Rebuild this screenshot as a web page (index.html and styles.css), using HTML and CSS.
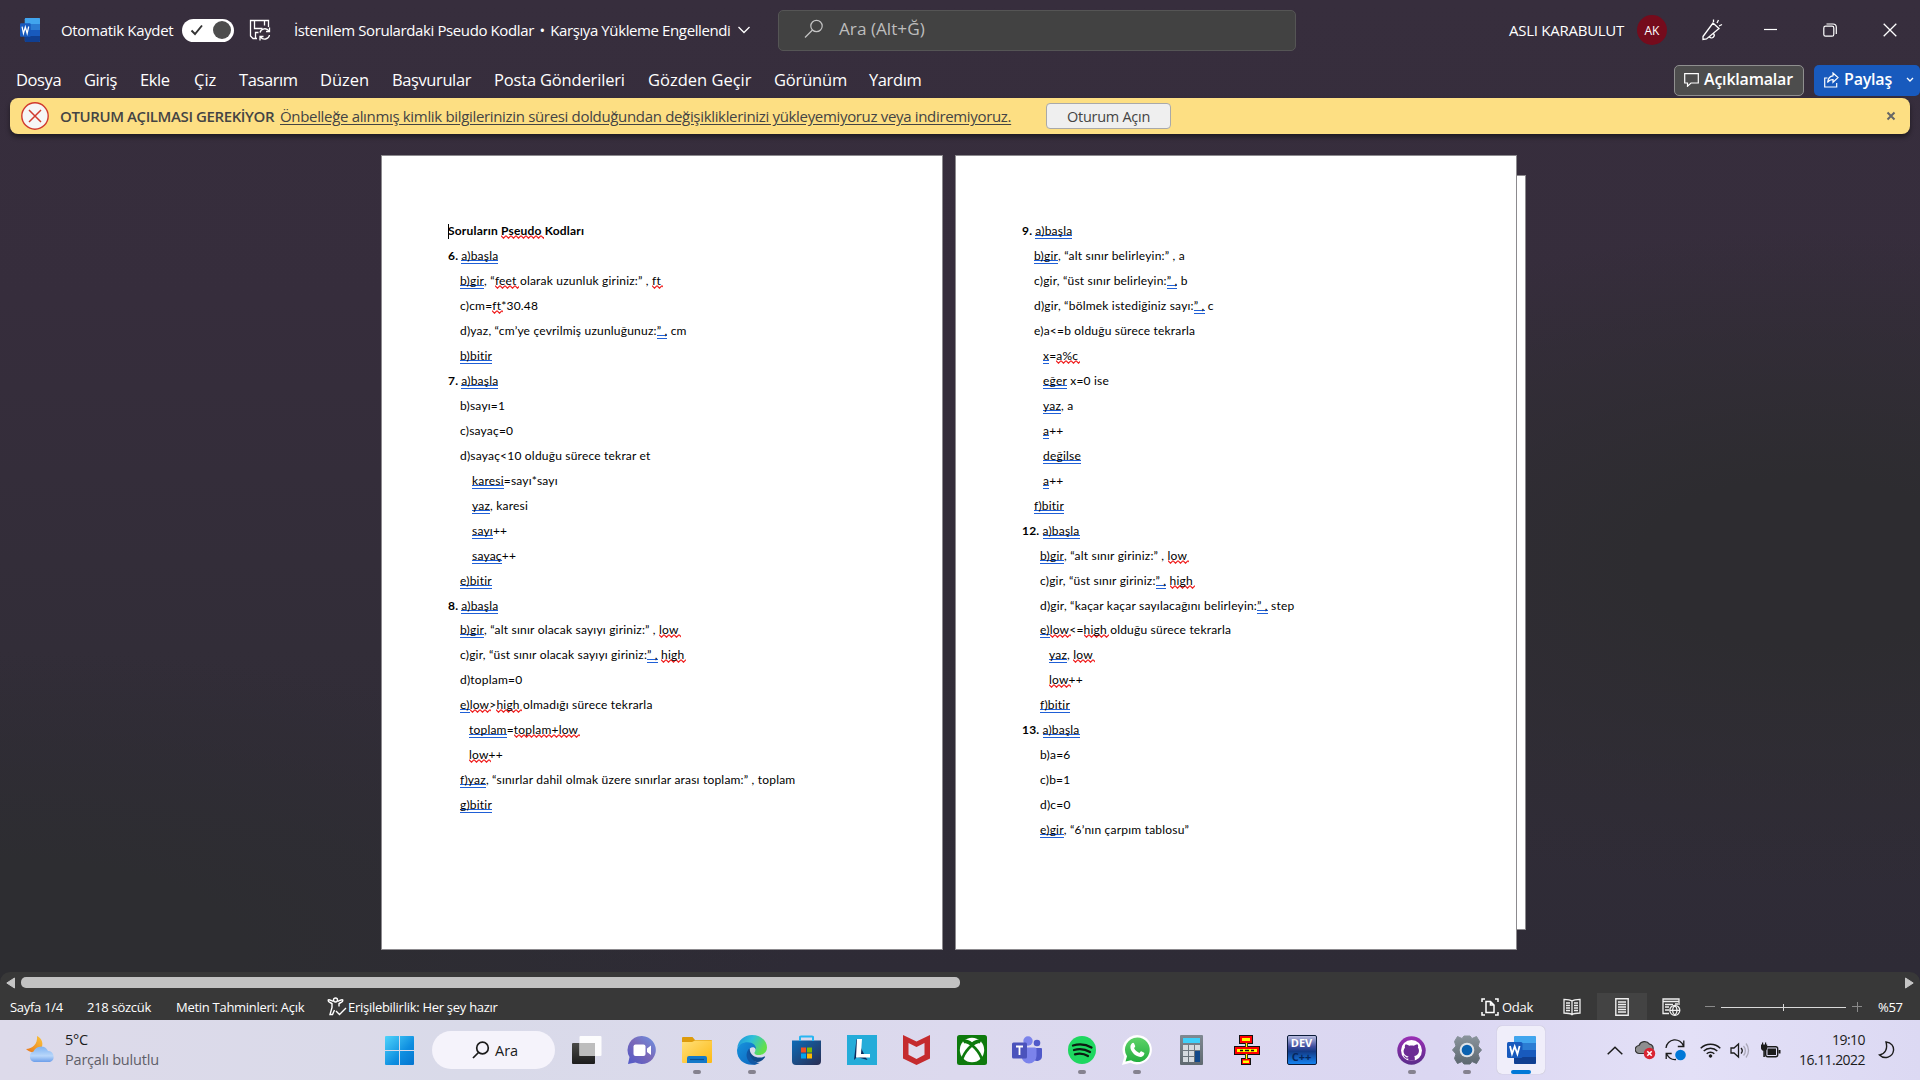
FILE: index.html
```html
<!DOCTYPE html>
<html lang="tr">
<head>
<meta charset="utf-8">
<title>İstenilem Sorulardaki Pseudo Kodlar</title>
<link rel="stylesheet" href="styles.css">
</head>
<body>
<div class="app">
  <header class="titlebar">
    <svg class="word-logo" width="20" height="24" viewBox="0 0 29 28" preserveAspectRatio="none"><use href="#word"/></svg>
    <span class="autosave">Otomatik Kaydet</span>
    <span class="toggle"><svg width="14" height="12" viewBox="0 0 14 12"><path d="M1.5 6.5 5 10 12 1.5" fill="none" stroke="#333" stroke-width="1.9"/></svg><i class="knob"></i></span>
    <svg class="save" width="22" height="22" viewBox="0 0 22 22" fill="none" stroke="#fff" stroke-width="1.3"><path d="M8 19.500H4L1.500 17V1.500h18V8M5.500 1.500v8h8M15.500 1.500v5M6.500 19.500v-6h3"/><path d="M11 13.500a5 5 0 0 1 9-1.500M20.500 8.500V12.500H17M20.500 16a5 5 0 0 1-9 2M11 21.500V17.500H14.500"/></svg>
    <span class="doc-title">İstenilem Sorulardaki Pseudo Kodlar <i class="bullet">•</i> Karşıya Yükleme Engellendi</span>
    <svg class="title-chev" width="12" height="8" viewBox="0 0 12 8"><path d="M.5 1 6 6.500 11.500 1" fill="none" stroke="#fff" stroke-width="1.3"/></svg>
    <div class="search">
      <svg width="20" height="20" viewBox="0 0 20 20" fill="none" stroke="#c4c4c4" stroke-width="1.2"><circle cx="12.500" cy="7" r="5.700"/><path d="M8.500 11 1 18.500"/></svg>
      <span>Ara (Alt+Ğ)</span>
    </div>
    <span class="user">ASLI KARABULUT</span>
    <span class="avatar">AK</span>
    <svg class="pen" width="22" height="22" viewBox="0 0 22 22" fill="none" stroke="#fff" stroke-width="1.3"><path d="M2 17.500 12 4l6 5.500L5.500 20 2 20.500Z M12 4l6.500 6M8.500 18a2.200 2.200 0 1 0 4-3.500M12.500 3V.5M16 4l1.500-3M18 7l3-1.500"/></svg>
    <svg class="wmin" width="14" height="14" viewBox="0 0 14 14"><path d="M0 6.500h13" stroke="#fff" stroke-width="1.200"/></svg>
    <svg class="wmax" width="14" height="14" viewBox="0 0 14 14" fill="none" stroke="#fff" stroke-width="1.200"><rect x=".8" y="3.200" width="10" height="10" rx="1.800"/><path d="M3.500 1h6.500a3.300 3.300 0 0 1 3.300 3.300V11"/></svg>
    <svg class="wclose" width="14" height="14" viewBox="0 0 14 14"><path d="m.7.700 12.600 12.600m0-12.600L.7 13.300" stroke="#fff" stroke-width="1.300"/></svg>
  </header>

  <nav class="tabs">
    <div class="tablist"><span>Dosya</span><span>Giriş</span><span>Ekle</span><span class="wide">Çiz</span><span>Tasarım</span><span class="wide">Düzen</span><span>Başvurular</span><span class="mid">Posta Gönderileri</span><span class="wide">Gözden Geçir</span><span class="mid">Görünüm</span><span>Yardım</span></div>
    <div class="actions">
      <button class="btn comments"><svg width="15" height="14" viewBox="0 0 15 14"><path d="M.7.700h13.600v9.300H7L3.500 13.200V10H.7Z" fill="none" stroke="#fff" stroke-width="1.200"/></svg><span>Açıklamalar</span></button>
      <button class="btn share"><svg width="15" height="16" viewBox="0 0 15 16" fill="none" stroke="#fff" stroke-width="1.200"><path d="M3.500 6H.7v9h12v-4"/><path d="M9 1v2.800C5.500 4 4 6.500 3.500 10.500 5 8.300 6.500 7.500 9 7.500v2.800L14 5.600Z"/></svg><span>Paylaş</span><svg class="share-chev" width="8" height="6" viewBox="0 0 8 6"><path d="m1 1 3 3 3-3" fill="none" stroke="#fff" stroke-width="1.300"/></svg></button>
    </div>
  </nav>

  <div class="notice">
    <svg width="28" height="28" viewBox="0 0 28 28"><circle cx="14" cy="14" r="13.200" fill="#f6f6f6" stroke="#d13a2e" stroke-width="1.400"/><path d="m8 8 12 12m0-12L8 20" stroke="#d13a2e" stroke-width="1.500"/></svg>
    <b>OTURUM AÇILMASI GEREKİYOR</b>
    <a>Önbelleğe alınmış kimlik bilgilerinizin süresi dolduğundan değişikliklerinizi yükleyemiyoruz veya indiremiyoruz.</a>
    <button class="signin"><span>Oturum Açın</span></button>
    <svg class="notice-x" width="10" height="10" viewBox="0 0 10 10"><path d="m1.500 1.500 7 7m0-7-7 7" stroke="#666" stroke-width="2"/></svg>
  </div>

  <main class="canvas">
    <article class="page first">
      <p><b><i class="caret"></i>Soruların <span class="sp">Pseudo</span> Kodları</b></p>
      <p><b>6. </b><span class="gr">a)başla</span></p>
      <p class="i1"><span class="gr">b)gir</span>, “<span class="sp">feet</span> olarak uzunluk giriniz:” , <span class="sp">ft</span></p>
      <p class="i1">c)cm=<span class="sp">ft</span>*30.48</p>
      <p class="i1">d)yaz, “cm’ye çevrilmiş uzunluğunuz:<span class="gr">” ,</span> cm</p>
      <p class="i1"><span class="gr">b)bitir</span></p>
      <p><b>7. </b><span class="gr">a)başla</span></p>
      <p class="i1">b)sayı=1</p>
      <p class="i1">c)sayaç=0</p>
      <p class="i1">d)sayaç&lt;10 olduğu sürece tekrar et</p>
      <p class="i3"><span class="gr">karesi</span>=sayı*sayı</p>
      <p class="i3"><span class="gr">yaz</span>, karesi</p>
      <p class="i3"><span class="gr">sayı</span>++</p>
      <p class="i3"><span class="gr">sayaç</span>++</p>
      <p class="i1"><span class="gr">e)bitir</span></p>
      <p><b>8. </b><span class="gr">a)başla</span></p>
      <p class="i1"><span class="gr">b)gir</span>, “alt sınır olacak sayıyı giriniz:” , <span class="sp">low</span></p>
      <p class="i1">c)gir, “üst sınır olacak sayıyı giriniz:<span class="gr">” ,</span> <span class="sp">high</span></p>
      <p class="i1">d)toplam=0</p>
      <p class="i1"><span class="gr">e)</span><span class="sp">low</span>&gt;<span class="sp">high</span> olmadığı sürece tekrarla</p>
      <p class="i2"><span class="gr">toplam</span>=<span class="sp">toplam+low</span></p>
      <p class="i2"><span class="sp">low</span>++</p>
      <p class="i1"><span class="gr">f)yaz</span>, “sınırlar dahil olmak üzere sınırlar arası toplam:” , toplam</p>
      <p class="i1"><span class="gr">g)bitir</span></p>
    </article>
    <article class="page second">
      <p><b>9. </b><span class="gr">a)başla</span></p>
      <p class="i1"><span class="gr">b)gir</span>, “alt sınır belirleyin:” , a</p>
      <p class="i1">c)gir, “üst sınır belirleyin:<span class="gr">” ,</span> b</p>
      <p class="i1">d)gir, “bölmek istediğiniz sayı:<span class="gr">” ,</span> c</p>
      <p class="i1">e)a&lt;=b olduğu sürece tekrarla</p>
      <p class="i2"><span class="gr">x</span>=<span class="sp">a%c</span></p>
      <p class="i2"><span class="gr">eğer</span> x=0 ise</p>
      <p class="i2"><span class="gr">yaz</span>, a</p>
      <p class="i2"><span class="gr">a</span>++</p>
      <p class="i2"><span class="gr">değilse</span></p>
      <p class="i2"><span class="gr">a</span>++</p>
      <p class="i1"><span class="gr">f)bitir</span></p>
      <p><b>12. </b><span class="gr">a)başla</span></p>
      <p class="i4"><span class="gr">b)gir</span>, “alt sınır giriniz:” , <span class="sp">low</span></p>
      <p class="i4">c)gir, “üst sınır giriniz:<span class="gr">” ,</span> <span class="sp">high</span></p>
      <p class="i4">d)gir, “kaçar kaçar sayılacağını belirleyin:<span class="gr">” ,</span> step</p>
      <p class="i4"><span class="gr">e)</span><span class="sp">low</span>&lt;=<span class="sp">high</span> olduğu sürece tekrarla</p>
      <p class="i5"><span class="gr">yaz</span>, <span class="sp">low</span></p>
      <p class="i5"><span class="sp">low</span>++</p>
      <p class="i4"><span class="gr">f)bitir</span></p>
      <p><b>13. </b><span class="gr">a)başla</span></p>
      <p class="i4">b)a=6</p>
      <p class="i4">c)b=1</p>
      <p class="i4">d)c=0</p>
      <p class="i4"><span class="gr">e)gir</span>, “6’nın çarpım tablosu”</p>
    </article>
    <div class="page-behind"></div>
  </main>

  <div class="scrollbar">
    <svg width="9" height="12" viewBox="0 0 9 12"><path d="M8.500 1v10L.8 6Z" fill="#c6c6c6" stroke="#c6c6c6" stroke-linejoin="round"/></svg>
    <div class="thumb"></div>
    <svg class="right" width="9" height="12" viewBox="0 0 9 12"><path d="M.5 1v10l7.700-5Z" fill="#c6c6c6" stroke="#c6c6c6" stroke-linejoin="round"/></svg>
  </div>

  <footer class="status">
    <span class="s1">Sayfa 1/4</span>
    <span class="s2">218 sözcük</span>
    <span class="s3">Metin Tahminleri: Açık</span>
    <svg class="acc" width="20" height="19" viewBox="0 0 20 19" fill="none" stroke="#fff" stroke-width="1.400"><circle cx="8.500" cy="3" r="2"/><path d="M1 3.200c0 2 2.500 2.300 4 3.300v4L3 17.500h2.500L7.500 13M16 3.200c0 2-2.500 2.300-4 3.300v3M1 3.200c1-1.500 3 .5 5 1M16 3.200c-1-1.500-3 .5-5 1M9 14l3.500 3.500 6.500-6.500"/></svg>
    <span class="s4">Erişilebilirlik: Her şey hazır</span>
    <div class="views">
      <svg width="18" height="18" viewBox="0 0 18 18" fill="none" stroke="#fff" stroke-width="1.500"><path d="M1 4V1h3M14 1h3v3M17 14v3h-3M4 17H1v-3M5 3.500h4.500L13 7v7.500H5ZM9.500 3.500V7H13"/></svg>
      <span class="odak">Odak</span>
      <svg class="v-read" width="18" height="18" viewBox="0 0 18 18" fill="none" stroke="#eee" stroke-width="1.300"><path d="M9 3C7 1.500 4 1.300 1 1.300V15c3 0 6 0 8 1.700C11 15 14 15 17 15V1.300c-3 0-6 .2-8 1.700ZM9 3v14M3 5h4M3 7.500h4M3 10h4M3 12.500h4M11 5h4M11 7.500h4M11 10h4M11 12.500h4"/></svg>
      <span class="v-active"><svg width="14" height="18" viewBox="0 0 14 18" fill="none" stroke="#eee" stroke-width="1.400"><path d="M.8.800h12.400v16.400H.8ZM3 4h8M3 6.500h8M3 9h8M3 11.500h8M3 14h8"/></svg></span>
      <svg class="v-web" width="19" height="18" viewBox="0 0 19 18" fill="none" stroke="#eee" stroke-width="1.300"><path d="M7 15.500H1V1h16v6M1 3.500h16M3 6.500h8M3 9h4M3 12h4M13 6h3"/><circle cx="12.800" cy="12.300" r="5" fill="#383838"/><path d="M8 12.300h10M12.800 7.300c-3 3-3 7 0 10M12.800 7.300c3 3 3 7 0 10"/></svg>
      <svg class="zoom" width="158" height="14" viewBox="0 0 158 14"><path d="M0 6.500h10M147 6.500h10M152.500 2v10" stroke="#8a8a8a" stroke-width="1"/><path d="M16 7.500h125M78.500 4v7" stroke="#d8d8d8"/></svg>
      <span class="pct">%57</span>
    </div>
  </footer>

  <section class="taskbar">
    <div class="weather">
      <svg width="32" height="32" viewBox="0 0 32 32"><defs><linearGradient id="mo" x1="0" y1="1" x2="1" y2="0"><stop offset="0" stop-color="#e8761c"/><stop offset="1" stop-color="#fbc63b"/></linearGradient><linearGradient id="cl" x1="0" y1="0" x2="0" y2="1"><stop offset="0" stop-color="#7fb3f2"/><stop offset=".6" stop-color="#b9d7fa"/><stop offset="1" stop-color="#6c9eea"/></linearGradient></defs><path d="M12 2c5 2 7 8 4 13-3 4-10 5-15 0 6 0 12-5 11-13Z" fill="url(#mo)"/><path d="M9 28a5.500 5.500 0 0 1-.5-10.500A8 8 0 0 1 23 17a5.700 5.700 0 0 1 2 11Z" fill="url(#cl)"/></svg>
      <div><span>5°C</span><span class="dim">Parçalı bulutlu</span></div>
    </div>
    <div class="cell"><svg width="29" height="29" viewBox="0 0 29 29"><defs><linearGradient id="wi" gradientUnits="userSpaceOnUse" x1="0" y1="0" x2="29" y2="29"><stop offset="0" stop-color="#4fd4fb"/><stop offset=".6" stop-color="#0e8ee0"/><stop offset="1" stop-color="#0474cf"/></linearGradient></defs><path fill="url(#wi)" d="M1 0h13v14H0V1a1 1 0 0 1 1-1ZM15 0h13a1 1 0 0 1 1 1v13H15ZM0 15h14v14H1a1 1 0 0 1-1-1ZM15 15h14v13a1 1 0 0 1-1 1H15Z"/></svg></div>
    <div class="pill"><svg width="18" height="18" viewBox="0 0 18 18" fill="none" stroke="#1b1b1b" stroke-width="1.700"><circle cx="10.500" cy="7" r="5.800"/><path d="M6.500 11.500 1 17"/></svg><span>Ara</span></div>
    <div class="cell"><svg width="30" height="29" viewBox="0 0 30 29"><defs><linearGradient id="tv" x1="0" y1="0" x2="0" y2="1"><stop offset="0" stop-color="#4a4a48"/><stop offset="1" stop-color="#1c1c1c"/></linearGradient></defs><rect y="7" width="23" height="21" rx="1" fill="url(#tv)"/><rect x="7.500" width="22" height="20" rx="1" fill="#fff" fill-opacity=".9"/><path d="M7.500 7H23v13H7.500Z" fill="#bdbdbd"/></svg></div>
    <div class="cell"><svg width="30" height="30" viewBox="0 0 30 30"><defs><linearGradient id="ch" x1="1" y1="0" x2="0" y2="1"><stop offset="0" stop-color="#6d93e4"/><stop offset=".5" stop-color="#7a68b8"/><stop offset="1" stop-color="#5059c9"/></linearGradient></defs><path d="M15 1a14 14 0 1 1-6.500 26.500L1 29l1.500-7A14 14 0 0 1 15 1Z" fill="url(#ch)"/><rect x="6.500" y="9.500" width="12" height="11.500" rx="2" fill="#fff"/><path d="m20 13.500 4-3v9.500l-4-3Z" fill="#fff"/></svg></div>
    <div class="cell run"><svg width="30" height="28" viewBox="0 0 30 28"><defs><linearGradient id="fo" x1="0" y1="0" x2="1" y2="1"><stop offset="0" stop-color="#ffe07a"/><stop offset="1" stop-color="#fdb913"/></linearGradient></defs><path d="M0 2a1 1 0 0 1 1-1h9.500L13 4h16a1 1 0 0 1 1 1v6H0Z" fill="#dd9b0c"/><path d="M0 6h10l3-1.500h17V26a1 1 0 0 1-1 1H1a1 1 0 0 1-1-1Z" fill="url(#fo)"/><path d="M5 27v-5a2 2 0 0 1 2-2h16a2 2 0 0 1 2 2v5Z" fill="#1479c9"/><path d="M8 23.500h14" stroke="#0c4f91" stroke-width="1.200"/></svg></div>
    <div class="cell run"><svg width="30" height="30" viewBox="0 0 30 30"><defs><linearGradient id="e1" x1="0" y1="0" x2="1" y2=".4"><stop offset="0" stop-color="#1b8fdc"/><stop offset=".5" stop-color="#2fc0d8"/><stop offset="1" stop-color="#62e04c"/></linearGradient><linearGradient id="e2" x1="0" y1="0" x2="1" y2="1"><stop offset="0" stop-color="#1794dd"/><stop offset="1" stop-color="#0c62bd"/></linearGradient></defs><path d="M.3 13C1 5.500 7 0 15 0c9 0 15 6 15 12.500 0 5-4 7.500-8 7.500-3.500 0-5-1.300-4.500-2.500 1.500-1.500 1.500-5.500-2-7.500C10 7 2.500 8.500.3 13Z" fill="url(#e1)"/><path d="M.1 14.500C1 9.500 6 7.200 10.500 7.200c6 0 9 4 8.500 7-2-3-6.500-2.500-7.500 2-1 5 3.500 11.500 9.500 12.400C11 32.500 0 26.500 0 15.500Z" fill="url(#e2)"/><path d="M12.500 13.500c-5 6 1 14 8 13.500 3-.2 5.500-2 7.500-4.800.3-.5-.2-.9-.8-.6-5 2.300-14 1-14.700-8.100Z" fill="#114a8b"/><path d="M12.500 13.500c-5 4.500-3.500 13 3.500 16 2 .5 5-.5 6.500-1.500-6-1-11-6-10-14.500Z" fill="#1157a5"/></svg></div>
    <div class="cell"><svg width="29" height="30" viewBox="0 0 29 30"><defs><linearGradient id="st" x1="0" y1="0" x2="1" y2="1"><stop offset="0" stop-color="#0d6cb8"/><stop offset="1" stop-color="#2a2d52"/></linearGradient></defs><path d="M8 8V2.500a1 1 0 0 1 1-1h11a1 1 0 0 1 1 1V8" fill="none" stroke="#29b6f2" stroke-width="2"/><path d="M0 5.500h29V26a4 4 0 0 1-4 4H4a4 4 0 0 1-4-4Z" fill="url(#st)"/><path d="M8 1.500V6M21 1.500V6" stroke="#29b6f2" stroke-width="2"/><path d="M9 12.500h5v5H9Z" fill="#f25022"/><path d="M15 12.500h5v5h-5Z" fill="#7fba00"/><path d="M9 18.500h5v5H9Z" fill="#00a4ef"/><path d="M15 18.500h5v5h-5Z" fill="#ffb900"/></svg></div>
    <div class="cell"><svg width="30" height="30" viewBox="0 0 30 30"><path d="M0 0h30v30H0Z" fill="#24acd9"/><path d="M9.500 4 7 25l3-3 10.500 3-2-3Z" fill="#0a2a5c"/><path d="M10 4h5l-1 15h9v3.500H9Z" fill="#fff"/></svg></div>
    <div class="cell"><svg width="27" height="30" viewBox="0 0 27 30"><path d="m0 0 13.500 6.500L27 0v23.500L13.500 30 0 23.500Z" fill="#c52b2e"/><path d="m5.500 8 8 4 8-4v11.800l-8 4.200-8-4.200Z" fill="#e0dcee"/></svg></div>
    <div class="cell"><svg width="30" height="30" viewBox="0 0 30 30"><rect width="30" height="30" rx="2.500" fill="#0e7a0d"/><circle cx="15" cy="15" r="12.200" fill="#fff"/><path d="M5.500 5.500C8 3.500 11.500 5 15 7.200 18.500 5 22 3.500 24.500 5.500L22.500 8.500C20 8 17.500 9 15 10.800 12.500 9 10 8 7.500 8.500Z" fill="#0e7a0d"/><path d="M7 6C15 8 23 17 25 25M23 6C15 8 7 17 5 25" fill="none" stroke="#0e7a0d" stroke-width="2.600"/></svg></div>
    <div class="cell"><svg width="30" height="28" viewBox="0 0 30 28"><circle cx="25" cy="7" r="3.300" fill="#5059c9"/><path d="M20 12h9a1 1 0 0 1 1 1v7a5 5 0 0 1-9 3Z" fill="#5059c9"/><circle cx="16" cy="5" r="4.700" fill="#7b83eb"/><path d="M10 11.500h13a1.500 1.500 0 0 1 1.500 1.500v7a7.500 7.500 0 0 1-15 0Z" fill="#7b83eb"/><rect y="6.500" width="15" height="16" rx="1.500" fill="#4b53bc"/><path d="M4 10.500h7M7.500 10.500v8.500" stroke="#fff" stroke-width="1.800"/></svg></div>
    <div class="cell run"><svg width="28" height="28" viewBox="0 0 28 28"><circle cx="14" cy="14" r="14" fill="#1ed760"/><path d="M5 9.500c6-1.800 13-1.200 18.500 2M6 14c5-1.500 11-1 16 2M7 18.300c4.500-1.200 9-.7 13 1.700" fill="none" stroke="#0c1c12" stroke-width="2.300" stroke-linecap="round"/></svg></div>
    <div class="cell run"><svg width="30" height="30" viewBox="0 0 30 30"><defs><linearGradient id="wa" x1="0" y1="0" x2="0" y2="1"><stop offset="0" stop-color="#5fd36a"/><stop offset="1" stop-color="#23ae3e"/></linearGradient></defs><path d="M15.300 0A14.700 14.700 0 1 1 8.500 27.800L0 30l2.300-8.200A14.700 14.700 0 0 1 15.300 0Z" fill="#fff"/><path d="M15.300 2.400A12.300 12.300 0 1 1 9 25.200L3.500 26.600 5 21.300A12.300 12.300 0 0 1 15.300 2.400Z" fill="url(#wa)"/><path d="M10 8.200c.6-.7 1.700-.7 2 0l1.200 2.800c.2.700-.8 1.700-1.200 2.100 1.200 2.400 3 3.900 5.400 4.800.6-.6 1.300-1.800 1.900-1.600l2.900 1.400c.5.300.2 3.700-3.500 4.200-5.500.2-10.700-6-10.300-10.300 0-1.400.8-2.700 1.600-3.400Z" fill="#fff"/></svg></div>
    <div class="cell"><svg width="23" height="30" viewBox="0 0 23 30"><defs><linearGradient id="ca" x1="0" y1="0" x2="0" y2="1"><stop offset="0" stop-color="#7f8992"/><stop offset="1" stop-color="#5f6970"/></linearGradient></defs><rect width="23" height="30" rx="1" fill="url(#ca)"/><path d="M3 3h17v5H3Z" fill="#3ed0fa"/><path d="M3 10h5v5H3ZM9 10h5v5H9ZM15 10h5v5h-5ZM3 16h5v5H3ZM9 16h5v5H9ZM3 22h5v5H3ZM9 22h5v5H9Z" fill="#d5dbe0"/><path d="M15 16h5v11h-5Z" fill="#11498a"/></svg></div>
    <div class="cell"><svg width="26" height="30" viewBox="0 0 26 30"><path d="M5 0h14v9h-5v2h12v9H14v3h3v7H7v-7h4v-3H0v-9h11V9H5Z" fill="#111"/><path d="M6 1h12v7H6ZM1 12h24v7H1ZM8 24h8v5H8Z" fill="#f00"/><path d="M8 3h8v3H8ZM3 14h20v3H3ZM9 25.500h6V28H9ZM11.800 8h1.400v4h-1.400ZM11.800 19h1.400v5h-1.400Z" fill="#ff0"/><path d="M6 15.500h3M11 15.500h4M17 15.500h3" stroke="#111" stroke-width="1.300"/></svg></div>
    <div class="cell"><div class="dev"><span>DEV</span><span class="cpp">C++</span></div></div>
    <div class="cell"></div>
    <div class="cell run"><svg width="29" height="29" viewBox="0 0 29 29"><defs><linearGradient id="gh" x1="0" y1="0" x2="0" y2="1"><stop offset="0" stop-color="#9a2fb5"/><stop offset="1" stop-color="#5a2c8a"/></linearGradient></defs><circle cx="14.500" cy="14.500" r="14.200" fill="url(#gh)"/><circle cx="14.500" cy="14.500" r="10.500" fill="#fff"/><path d="M8.300 8.500c1.500-.3 3 .6 3.800 1.200 1.600-.4 3.300-.4 4.900 0 .8-.6 2.300-1.500 3.800-1.200.5 1.200.4 2.300.1 3 2.400 3.500.6 8-3.700 8.600.5.700.6 1.400.6 2.200v2.500h-6.500v-2.200c-3 .5-3.500-1-4.200-2-.4-.5-.6-.8-.7-1.100 1.500-.5 2.200 2 3.500 2 .8 0 1.400-.2 1.600-1-4.800-.8-6.300-5.300-3.500-9-.3-.7-.2-1.800.3-3Z" fill="#6c2c94"/></svg></div>
    <div class="cell run"><svg width="30" height="30" viewBox="0 0 30 30"><defs><linearGradient id="ge" x1="0" y1="0" x2="0" y2="1"><stop offset="0" stop-color="#8a949c"/><stop offset="1" stop-color="#5d6870"/></linearGradient></defs><path d="M5.500 1.500 10 3.500 12 1h6l2 2.500 4.500-2 3 5-1.500 4.500 3.500 4-3.500 4 1.500 4.500-3 5-4.500-2L18 29h-6l-2-2.500-4.500 2-3-5L4 19 .5 15 4 11 2.500 6.500Z" fill="url(#ge)" stroke="url(#ge)" stroke-linejoin="round"/><circle cx="15" cy="15" r="7.300" fill="#dfe3e8"/><circle cx="15" cy="15" r="5.300" fill="#0b62b0"/></svg></div>
    <div class="cell active"><svg width="29" height="28" viewBox="0 0 29 28"><g id="word"><rect x="7" width="22" height="28" rx="1.500" fill="#2b7cd3"/><path d="M7 7V1.500A1.500 1.500 0 0 1 8.500 0h19A1.500 1.500 0 0 1 29 1.500V7Z" fill="#41a5ee"/><path d="M7 14h22v7H7Z" fill="#185abd"/><path d="M7 21h22v5.500a1.500 1.500 0 0 1-1.500 1.500h-19A1.500 1.500 0 0 1 7 26.500Z" fill="#103f91"/><rect y="6" width="15.500" height="16" rx="1.500" fill="#185abd"/><path d="m3 10 2 8 2.700-7.500L10.400 18l2.200-8" fill="none" stroke="#fff" stroke-width="1.800"/></g></svg></div>
    <div class="tray">
      <svg class="t1" width="16" height="9" viewBox="0 0 16 9"><path d="m.7 8.300 7.300-7 7.300 7" fill="none" stroke="#1b1b1b" stroke-width="1.500"/></svg>
      <svg class="t2" width="21" height="20" viewBox="0 0 21 20"><path d="M4.500 13.500a4 4 0 0 1-.5-8 6 6 0 0 1 10.500-1.300c3 .3 4 3 3.500 5.300l-6 4Z" fill="#8e8e90" stroke="#333" stroke-width="1.200"/><circle cx="14.500" cy="13.500" r="5.700" fill="#d92432"/><path d="m12.300 11.300 4.400 4.400m0-4.400-4.400 4.400" stroke="#fff" stroke-width="1.600"/></svg>
      <svg class="t3" width="21" height="22" viewBox="0 0 21 22" fill="none" stroke="#1b1b1b" stroke-width="1.300"><path d="M1 9a9 9 0 0 1 17.500-2M18.800 1.500v6h-6M1.200 20v-5.500h5.500M2 15.500a9 9 0 0 0 9 5"/><circle cx="15.500" cy="16" r="5.300" fill="#0078d7" stroke="none"/></svg>
      <svg class="t4" width="21" height="16" viewBox="0 0 21 16" fill="none" stroke="#1b1b1b" stroke-width="1.400"><path d="M.7 6.300a14 14 0 0 1 19.600 0M3.700 9a9.800 9.800 0 0 1 13.600 0M6.700 11.700a5.500 5.500 0 0 1 7.600 0"/><circle cx="10.500" cy="14" r="1.300" fill="#1b1b1b" stroke-width="1"/></svg>
      <svg class="t5" width="21" height="17" viewBox="0 0 21 17" fill="none" stroke="#1b1b1b" stroke-width="1.300"><path d="M1 6v5h3l4.500 4V2L4 6ZM11 6a4 4 0 0 1 0 5.500"/><path d="M13.500 4a7 7 0 0 1 0 9.500M16 1.500a11 11 0 0 1 0 14" stroke="#aaa8b8"/></svg>
      <svg class="t6" width="21" height="17" viewBox="0 0 21 17"><rect x="5.700" y="4.700" width="12" height="10" rx="2" fill="none" stroke="#1b1b1b" stroke-width="1.400"/><path d="M7.500 6.500h8.500v6.500H7.500ZM18.500 8h2v3.500h-2ZM1 2.500h1V.5h1.200v2H5V.5h1.200v2h1V6c0 1.500-1 2.500-2.300 2.700V15H3.300V8.700C2 8.500 1 7.500 1 6Z" fill="#1b1b1b"/></svg>
      <div class="clock"><span>19:10</span><span>16.11.2022</span></div>
      <svg class="t7" width="17" height="18" viewBox="0 0 17 18"><path d="M8 1c5.500.5 8 4.500 7.500 8.500-.8 6.500-9 9.500-14 4.500C7 13 10 8 8 1Z" fill="none" stroke="#1b1b1b" stroke-width="1.400"/></svg>
    </div>
  </section>
</div>
</body>
</html>
```
FILE: styles.css
```css
* { box-sizing: border-box; }
body { margin: 0; font-family: "Open Sans", "Noto Sans", sans-serif; font-size: 15px; }
svg { display: block; flex: none; }
span, b, a { white-space: nowrap; }
button { font: inherit; margin: 0; padding: 0; }

.app {
  width: 1920px; height: 1080px; overflow: hidden;
  display: flex; flex-direction: column;
  background:
    radial-gradient(650px 330px at 94% 52%, #2d2c30 25%, rgba(45,44,48,0)),
    radial-gradient(800px 300px at 0% 88%, #2d2d31 30%, rgba(45,45,49,0)),
    linear-gradient(180deg, #372e3d 0, #362d3c 300px, #322d38 650px, #2e2b36 970px);
  color: #fff;
}

/* title bar */
.titlebar { height: 60px; display: flex; align-items: center; flex: none; }
.word-logo { margin-left: 20px; }
.autosave { margin-left: 21px; width: 112px; letter-spacing: -.32px; }
.toggle { margin-left: 9px; width: 52px; height: 23px; border-radius: 12px; background: #fff; display: flex; align-items: center; justify-content: space-between; padding: 0 3px 0 8px; }
.knob { width: 18px; height: 18px; border-radius: 50%; background: #4d4d4d; }
.save { margin-left: 15px; }
.doc-title { margin-left: 23px; width: 437px; letter-spacing: -.39px; }
.bullet { font-style: normal; margin: 0 2px; }
.title-chev { margin-left: 7px; }
.search { margin-left: 28px; width: 518px; height: 41px; border-radius: 5px; background: #424242; border: 1px solid #555; display: flex; align-items: center; padding: 0 0 2px 25px; color: #bdbdbd; font-size: 17.200px; gap: 15px; }
.search span { margin-top: -2px; }
.user { margin-left: 213px; width: 115px; letter-spacing: -.26px; }
.avatar { margin-left: 13px; width: 30px; height: 30px; border-radius: 50%; background: #750b1c; display: flex; align-items: center; justify-content: center; font-size: 12px; }
.pen { margin-left: 34px; }
.wmin { margin-left: 41px; }
.wmax { margin-left: 45px; }
.wclose { margin-left: 46px; }

/* ribbon tabs */
.tabs { height: 38px; flex: none; display: flex; align-items: center; padding-left: 16px; }
.tablist { display: grid; grid-template-columns: 68px 56px 54px 45px 81px 72px 102px 154px 126px 95px 52px; font-size: 16.500px; letter-spacing: -.4px; }
.tablist .wide { letter-spacing: 0; }
.tablist .mid { letter-spacing: -.17px; }
.actions { margin: 2px 0 0 auto; display: flex; gap: 10px; }
.btn { height: 31px; border-radius: 5px; color: #fff; font-weight: 600; display: flex; align-items: center; font-size: 16px; letter-spacing: -.2px; }
.btn span { margin-top: -2px; }
.comments { width: 130px; background: #4d4d4d; border: 1px solid #8f8f8f; padding-left: 9px; gap: 5px; }
.share { width: 106px; background: #185abd; border: 0; padding-left: 10px; gap: 5px; }
.share-chev { margin-left: 9px; }

/* sign-in notice */
.notice { height: 36px; flex: none; margin: 0 10px; border-radius: 8px; background: #fddf83; color: #444; display: flex; align-items: center; padding-left: 11px; box-shadow: 0 3px 5px rgba(0,0,0,.45); }
.notice b { margin-left: 11px; width: 214px; font-weight: 600; letter-spacing: -.4px; }
.notice a { margin-left: 6px; width: 731px; text-decoration: underline; text-underline-offset: 2px; letter-spacing: -.33px; }
.signin { margin-left: 35px; width: 125px; height: 26px; background: #efefef; border: 1px solid #a9a9a9; border-radius: 4px; color: #444; display: flex; align-items: center; justify-content: center; font-size: 14.500px; letter-spacing: -.27px; }
.notice-x { margin-left: auto; margin-right: 14px; }

/* document area */
.canvas { flex: 1; display: flex; align-items: flex-start; padding: 21px 0 0 381px; }
.page { width: 562px; height: 795px; background: #fff; border: 1px solid #8c8a8e; color: #000; font-family: Lato, "Open Sans", sans-serif; font-size: 12px; letter-spacing: .2px; padding: 62px 0 0 66px; }
.second { margin-left: 12px; }
.page-behind { width: 9px; height: 755px; margin-top: 20px; background: #fff; border: 1px solid #8c8a8e; border-left: 0; }
.page p { margin: 0; height: 25px; line-height: 25px; white-space: pre; }
.page p:nth-child(17) { margin-top: -1px; }
.page .i1 { padding-left: 12px; }
.page .i2 { padding-left: 21px; }
.page .i3 { padding-left: 24px; }
.page .i4 { padding-left: 18px; }
.page .i5 { padding-left: 27px; }
.gr, .sp { display: inline-block; height: 25px; vertical-align: top; }
.gr { background: linear-gradient(#1f5fd6, #1f5fd6) 0 17px / 100% 1px no-repeat, linear-gradient(#1f5fd6, #1f5fd6) 0 20px / 100% 1px no-repeat; }
.sp { background: url("data:image/svg+xml,%3Csvg xmlns='http://www.w3.org/2000/svg' width='5' height='4'%3E%3Cpath d='M0 .7 2.500 3.200 5 .7' fill='none' stroke='%23f02020' stroke-width='1.200'/%3E%3C/svg%3E") 0 17px repeat-x; margin-right: -2px; padding-right: 2px; }
.caret { display: inline-block; width: 1px; height: 15px; background: #000; margin-right: -1px; vertical-align: -4px; }

/* horizontal scrollbar */
.scrollbar { height: 21px; flex: none; background: #383838; border-radius: 10px 10px 0 0; display: flex; align-items: center; padding: 0 6px; }
.thumb { width: 939px; height: 11px; border-radius: 5px; background: #c2c2c2; margin-left: 6px; }
.scrollbar .right { margin-left: auto; }

/* status bar */
.status { height: 27px; flex: none; background: #383838; display: flex; align-items: center; font-size: 13px; letter-spacing: -.28px; padding-left: 10px; }
.s1 { width: 54px; }
.s2 { margin-left: 23px; width: 64px; }
.s3 { margin-left: 25px; width: 127px; }
.acc { margin-left: 24px; }
.s4 { margin-left: 1px; }
.views { margin-left: auto; display: flex; align-items: center; height: 27px; padding-right: 17px; }
.odak { margin-left: 3px; width: 31px; }
.v-read { margin-left: 30px; }
.v-active { margin-left: 16px; width: 50px; height: 27px; background: #434343; display: flex; align-items: center; justify-content: center; }
.v-web { margin-left: 15px; }
.zoom { margin-left: 24px; }
.pct { margin-left: 15px; width: 25px; }

/* taskbar */
.taskbar { height: 60px; flex: none; display: flex; align-items: center; color: #1b1b1b; background: linear-gradient(90deg, #dddaea 0, #d9dae9 25%, #dcd9ee 50%, #dbd7f2 75%, #e3e0f7 88%, #dcd9f3 100%); }
.weather { width: 372px; padding-left: 25px; display: flex; gap: 8px; align-items: center; font-size: 14.500px; letter-spacing: -.2px; flex: none; }
.weather div { display: flex; flex-direction: column; line-height: 20px; }
.dim { color: #5f5e68; }
.cell { width: 55px; height: 48px; position: relative; display: flex; align-items: center; justify-content: center; flex: none; }
.run::after, .active::after { content: ""; position: absolute; bottom: 0; width: 8px; height: 4px; border-radius: 2px; background: #85828f; }
.active { width: 48px; margin: 0 3px; background: #f0eefa; border-radius: 5px; box-shadow: 0 0 1px #aaa; }
.active::after { width: 20px; background: #0078d7; }
.pill { width: 123px; height: 38px; border-radius: 19px; margin: 0 4px 0 5px; background: #f5f3fb; display: flex; align-items: center; padding-left: 40px; gap: 5px; font-size: 14.500px; flex: none; }
.dev { width: 30px; height: 30px; border: 1px solid #0b1b3a; border-radius: 2px; background: linear-gradient(#b9bde0, #3f4c9e 38%, #123a86 55%, #1583f0); color: #fff; font: bold 11px/14px "Open Sans", sans-serif; display: flex; flex-direction: column; align-items: center; }
.cpp { color: #06265c; }
.tray { margin-left: auto; display: flex; align-items: center; padding-right: 25px; }
.t2 { margin-left: 12px; }
.t3 { margin-left: 9px; }
.t4 { margin-left: 14px; }
.t5 { margin-left: 9px; }
.t6 { margin-left: 9px; }
.clock { width: 84px; display: flex; flex-direction: column; align-items: flex-end; line-height: 20px; font-size: 14px; letter-spacing: -.55px; }
.t7 { margin-left: 13px; }
```
